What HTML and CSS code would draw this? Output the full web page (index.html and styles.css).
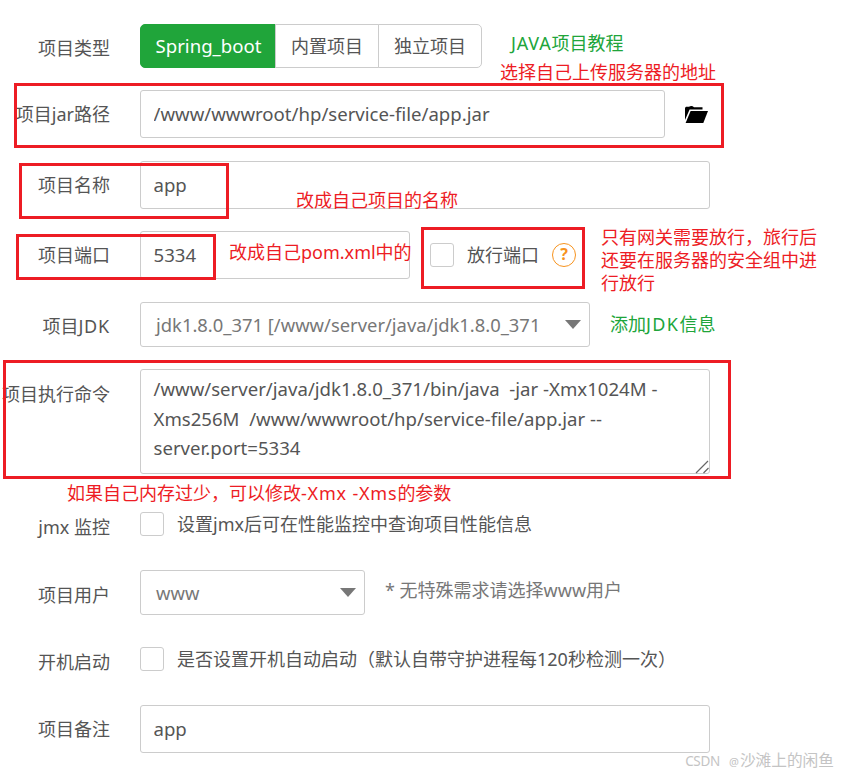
FILE: index.html
```html
<!DOCTYPE html>
<html lang="en">
<head>
  <meta charset="utf-8"/>
  <meta name="viewport" content="width=device-width,initial-scale=1"/>
  <title>添加Java项目</title>
  <link rel="stylesheet" href="styles.css">
</head>
<body>
<div class="page">
  <form class="form">
    <div class="row row-type">
      <label class="row-label">项目类型</label>
      <div class="btn-group">
        <button type="button" class="btn active">Spring_boot</button>
        <button type="button" class="btn">内置项目</button>
        <button type="button" class="btn">独立项目</button>
      </div>
      <a class="help-link link-java"><span class="latin">JAVA</span>项目教程</a>
    </div>

    <div class="row row-path">
      <label class="row-label" for="path">项目jar路径</label>
      <input id="path" class="field field-path" value="/www/wwwroot/hp/service-file/app.jar">
      <svg class="folder" width="23" height="17" viewBox="0 0 23 17" aria-hidden="true">
        <path d="M0 14V2.5C0 1.4.8.8 1.6.8H4C5.5-.3 7.5-.3 9 1.2H17.5V3.6H4.6Z"/>
        <path d="M5.6 5H23L18.3 17H.6Z"/>
      </svg>
    </div>

    <div class="row row-name">
      <label class="row-label" for="name">项目名称</label>
      <input id="name" class="field field-wide" value="app">
    </div>

    <div class="row row-port">
      <label class="row-label" for="port">项目端口</label>
      <input id="port" class="field field-port" value="5334">
      <span class="check check-port"></span>
      <span class="check-text">放行端口</span>
      <span class="help-icon">?</span>
    </div>

    <div class="row row-jdk">
      <label class="row-label">项目<span class="latin">JDK</span></label>
      <div class="select select-jdk">jdk1.8.0_371 [/www/server/java/jdk1.8.0_371</div>
      <a class="help-link link-jdk">添加<span class="latin">JDK</span>信息</a>
    </div>

    <div class="row row-cmd">
      <label class="row-label" for="cmd">项目执行命令</label>
      <textarea id="cmd" class="field field-wide command" spellcheck="false">/www/server/java/jdk1.8.0_371/bin/java  -jar -Xmx1024M -
Xms256M  /www/wwwroot/hp/service-file/app.jar --
server.port=5334</textarea>
      <svg class="grip" width="14" height="14" viewBox="0 0 14 14" aria-hidden="true">
        <path d="M1 13L13 1M8.5 13L13.5 8"/>
      </svg>
    </div>

    <div class="row row-check row-jmx">
      <label class="row-label">jmx 监控</label>
      <span class="check"></span>
      <span class="check-text">设置jmx后可在性能监控中查询项目性能信息</span>
    </div>

    <div class="row row-user">
      <label class="row-label">项目用户</label>
      <div class="select select-user">www</div>
      <span class="note">* 无特殊需求请选择www用户</span>
    </div>

    <div class="row row-check row-boot">
      <label class="row-label">开机启动</label>
      <span class="check"></span>
      <span class="check-text">是否设置开机自动启动（默认自带守护进程每120秒检测一次）</span>
    </div>

    <div class="row row-remark">
      <label class="row-label" for="remark">项目备注</label>
      <input id="remark" class="field field-wide" value="app">
    </div>
  </form>

  <!-- red notes drawn over the screenshot -->
  <div class="mark mark-path"></div>
  <div class="mark mark-name"></div>
  <div class="mark mark-port"></div>
  <div class="mark mark-open"></div>
  <div class="mark mark-cmd"></div>

  <p class="memo memo-path">选择自己上传服务器的地址</p>
  <p class="memo memo-name">改成自己项目的名称</p>
  <p class="memo memo-port">改成自己pom.xml中的</p>
  <p class="memo memo-open">只有网关需要放行，旅行后<br>还要在服务器的安全组中进<br>行放行</p>
  <p class="memo memo-cmd">如果自己内存过少，可以修改<span class="latin">-Xmx -Xms</span>的参数</p>

  <span class="watermark"><span class="wm-csdn">CSDN</span><span class="wm-at">@</span>沙滩上的闲鱼</span>
</div>
</body>
</html>
```

FILE: styles.css
```css
html, body {
  margin: 0;
  background: #fff;
}
.page {
  position: relative;
  width: 846px;
  height: 776px;
  overflow: hidden;
  font-family: "Noto Sans", "Noto Sans CJK SC", sans-serif;
  font-size: 18px;
  line-height: 24px;
  color: #555;
}
.latin {
  letter-spacing: .8px;
}
.form {
  padding-top: 24px;
}
.row {
  display: flex;
  align-items: center;
}
.row-label {
  flex: none;
  width: 110px;
  margin-right: 30px;
  text-align: right;
  white-space: nowrap;
}
.row-path { margin-top: 22px; }
.row-name { margin-top: 23px; }
.row-port { margin-top: 22px; }
.row-jdk { margin-top: 23px; }
.row-cmd { margin-top: 22px; align-items: flex-start; position: relative; }
.row-cmd .row-label { margin-top: 13px; }
.row-jmx { margin-top: 38px; }
.row-user { margin-top: 34px; }
.row-boot { margin-top: 32px; }
.row-remark { margin-top: 34px; }
.row-type .row-label { position: relative; top: 2px; }
.row-jdk .row-label { position: relative; top: 1px; }
.row-check .row-label { position: relative; top: 3px; }
.row-user .row-label { position: relative; top: 2px; }

.btn-group {
  display: flex;
  height: 44px;
}
.btn {
  box-sizing: border-box;
  height: 44px;
  padding: 0 15px;
  margin-left: -1px;
  border: 1px solid #ccc;
  background: #fff;
  color: #555;
  font: inherit;
}
.btn:first-child {
  margin-left: 0;
  width: 136px;
  padding: 0 0 0 1px;
  border-radius: 5px 0 0 5px;
}
.btn:last-child {
  width: 104px;
  border-radius: 0 5px 5px 0;
}
.btn.active {
  border-color: #20a53a;
  background: #20a53a;
  color: #fff;
  font-size: 18.6px;
}
.help-link {
  color: #20a53a;
}
.link-java {
  margin-left: 29px;
  position: relative;
  top: -3px;
}
.link-jdk {
  margin-left: 20px;
  position: relative;
  top: -1px;
}
.link-jdk .latin {
  letter-spacing: 1.4px;
}

.field {
  display: block;
  box-sizing: border-box;
  height: 48px;
  padding: 0 12.5px 1px;
  border: 1px solid #ccc;
  border-radius: 3px;
  outline: none;
  background: #fff;
  color: #555;
  font: inherit;
  font-size: 18.6px;
}
.field-path { width: 525px; }
.field-wide { width: 570px; }
.field-port { width: 270px; }
.command {
  height: 105px;
  padding: 4px 12.5px;
  line-height: 29.6px;
  white-space: pre;
  overflow: hidden;
  resize: none;
}
.grip {
  position: absolute;
  left: 695px;
  top: 91px;
  fill: none;
  stroke: #666;
  stroke-width: 1.2;
}
.folder {
  margin-left: 20px;
  fill: #000;
}

.check {
  flex: none;
  box-sizing: border-box;
  width: 24px;
  height: 24px;
  border: 1px solid #ccc;
  border-radius: 3px;
  background: #fff;
}
.check-port {
  margin-left: 20px;
}
.check-text {
  margin-left: 13px;
  white-space: nowrap;
}
.help-icon {
  box-sizing: border-box;
  width: 24px;
  height: 24px;
  margin-left: 13px;
  border: 1px solid #f7931e;
  border-radius: 50%;
  color: #f7931e;
  font-size: 16px;
  font-weight: 700;
  line-height: 21px;
  text-align: center;
}

.select {
  box-sizing: border-box;
  height: 45px;
  padding: 0 15px;
  border: 1px solid #ccc;
  border-radius: 3px;
  color: #777;
  font-size: 18.4px;
  line-height: 43px;
  white-space: nowrap;
  position: relative;
}
.select::after {
  content: "";
  position: absolute;
  right: 8px;
  top: 17px;
  border-style: solid;
  border-width: 9px 8.5px 0;
  border-color: #777 transparent transparent;
}
.select-jdk { width: 450px; }
.select-user { width: 225px; }
.note {
  margin-left: 20px;
  color: #777;
  position: relative;
  top: -3px;
}

.mark {
  position: absolute;
  box-sizing: border-box;
  border: 3px solid #ed1c24;
}
.mark-path { left: 14px; top: 83px; width: 710px; height: 65px; }
.mark-name { left: 19px; top: 163px; width: 210px; height: 56px; }
.mark-port { left: 16px; top: 234px; width: 200px; height: 46px; }
.mark-open { left: 421px; top: 227px; width: 164px; height: 62px; }
.mark-cmd { left: 3px; top: 360px; width: 728px; height: 119px; }

.memo {
  position: absolute;
  margin: 0;
  color: #ed1c24;
  white-space: nowrap;
}
.memo-path { left: 500px; top: 60px; }
.memo-name { left: 296px; top: 188px; }
.memo-port { left: 229px; top: 240px; }
.memo-open { left: 601px; top: 226px; line-height: 23px; }
.memo-cmd { left: 67px; top: 481px; }

.watermark {
  position: absolute;
  right: 12px;
  top: 750px;
  color: #c4c4c4;
  font-size: 15.7px;
  line-height: 20px;
  white-space: nowrap;
}
.wm-csdn {
  font-size: 13.5px;
  letter-spacing: -.3px;
}
.wm-at {
  margin: 0 1px 0 9px;
  font-size: 11px;
}
```
